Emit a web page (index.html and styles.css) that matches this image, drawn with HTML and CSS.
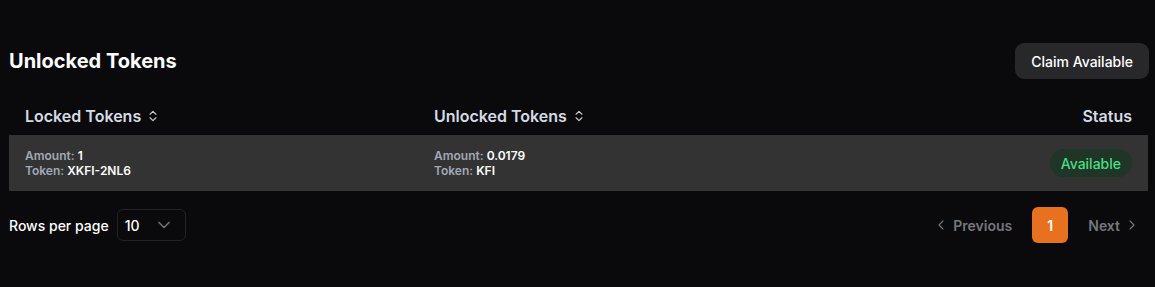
FILE: index.html
```html
<!DOCTYPE html>
<html>
<head>
<meta charset="utf-8">
<link rel="stylesheet" href="styles.css">
</head>
<body>
<div class="wrap">
  <div class="top">
    <h2 class="title">Unlocked Tokens</h2>
    <button class="claim">Claim Available</button>
  </div>
  <div class="table">
    <div class="thead">
      <div class="th">Locked Tokens <svg class="sort" width="14" height="14" viewBox="0 0 24 24" fill="none" stroke="currentColor" stroke-width="2" stroke-linecap="round" stroke-linejoin="round"><path d="m7 15 5 5 5-5"/><path d="m7 9 5-5 5 5"/></svg></div>
      <div class="th">Unlocked Tokens <svg class="sort" width="14" height="14" viewBox="0 0 24 24" fill="none" stroke="currentColor" stroke-width="2" stroke-linecap="round" stroke-linejoin="round"><path d="m7 15 5 5 5-5"/><path d="m7 9 5-5 5 5"/></svg></div>
      <div class="th right">Status</div>
    </div>
    <div class="row">
      <div class="cell">
        <div><span class="lbl">Amount:</span> <span class="val">1</span></div>
        <div><span class="lbl">Token:</span> <span class="val">XKFI-2NL6</span></div>
      </div>
      <div class="cell">
        <div><span class="lbl">Amount:</span> <span class="val">0.0179</span></div>
        <div><span class="lbl">Token:</span> <span class="val">KFI</span></div>
      </div>
      <div class="cell right"><span class="badge">Available</span></div>
    </div>
  </div>
  <div class="foot">
    <div class="rows">
      <span>Rows per page</span>
      <div class="select"><span>10</span><svg width="20" height="20" viewBox="0 0 24 24" fill="none" stroke="#6e6e73" stroke-width="2" stroke-linecap="round" stroke-linejoin="round"><path d="m6 9 6 6 6-6"/></svg></div>
    </div>
    <div class="pager">
      <span class="nav"><svg width="16" height="16" viewBox="0 0 24 24" fill="none" stroke="currentColor" stroke-width="1.6" stroke-linecap="round" stroke-linejoin="round"><path d="m15 18-6-6 6-6"/></svg>Previous</span>
      <span class="pgnum">1</span>
      <span class="nav">Next<svg width="16" height="16" viewBox="0 0 24 24" fill="none" stroke="currentColor" stroke-width="1.6" stroke-linecap="round" stroke-linejoin="round"><path d="m9 18 6-6-6-6"/></svg></span>
    </div>
  </div>
</div>
</body>
</html>
```
FILE: styles.css
```css
html, body {
  margin: 0;
  background: #0a0a0c;
  font-family: Inter, "Noto Sans", sans-serif;
  color: #fff;
}
.wrap {
  padding: 43px 6px 0 9px;
}
.top {
  display: flex;
  justify-content: space-between;
  align-items: center;
  height: 36px;
}
.title {
  margin: 0;
  font-size: 20px;
  font-weight: 700;
  color: #fff;
}
.claim {
  height: 36px;
  padding: 0 16px;
  border: none;
  border-radius: 9px;
  background: #28282b;
  color: #fff;
  font-family: inherit;
  font-size: 14px;
  font-weight: 500;
}
.table {
  margin-top: 18px;
  margin-right: 1px;
}
.thead, .row {
  display: grid;
  grid-template-columns: 409px 1fr 1fr;
  padding: 0 16px;
}
.thead {
  height: 38px;
  align-items: center;
}
.th {
  font-size: 16px;
  font-weight: 600;
  color: #d5dbe4;
  display: flex;
  align-items: center;
  gap: 5px;
}
.th.right { justify-content: flex-end; }
.sort { color: #c7ccd4; }
.row {
  background: #333333;
  height: 56px;
  align-items: center;
}
.cell {
  font-size: 12px;
  font-weight: 600;
  line-height: 15px;
}
.cell.right {
  display: flex;
  justify-content: flex-end;
}
.lbl { color: #a1a9b6; }
.val { color: #fff; }
.badge {
  display: inline-flex;
  align-items: center;
  height: 28px;
  padding: 0 11px;
  border-radius: 14px;
  background: #1e3527;
  color: #4ade80;
  font-size: 14px;
  font-weight: 500;
}
.foot {
  display: flex;
  justify-content: space-between;
  align-items: center;
  margin-top: 16px;
}
.rows {
  display: flex;
  align-items: center;
  gap: 8px;
  font-size: 14px;
  font-weight: 500;
}
.select {
  display: flex;
  align-items: center;
  justify-content: space-between;
  width: 69px;
  height: 32px;
  box-sizing: border-box;
  padding: 0 11px 0 7px;
  border: 1px solid #232326;
  border-radius: 6px;
  font-size: 14px;
}
.pager {
  display: flex;
  align-items: center;
  gap: 20px;
  padding-right: 9px;
}
.nav {
  display: flex;
  align-items: center;
  gap: 4px;
  color: #77777c;
  font-size: 14px;
  font-weight: 600;
}
.pgnum {
  width: 36px;
  height: 36px;
  border-radius: 6px;
  background: #e8711f;
  color: #fff;
  display: flex;
  align-items: center;
  justify-content: center;
  font-size: 14px;
  font-weight: 600;
}
```
